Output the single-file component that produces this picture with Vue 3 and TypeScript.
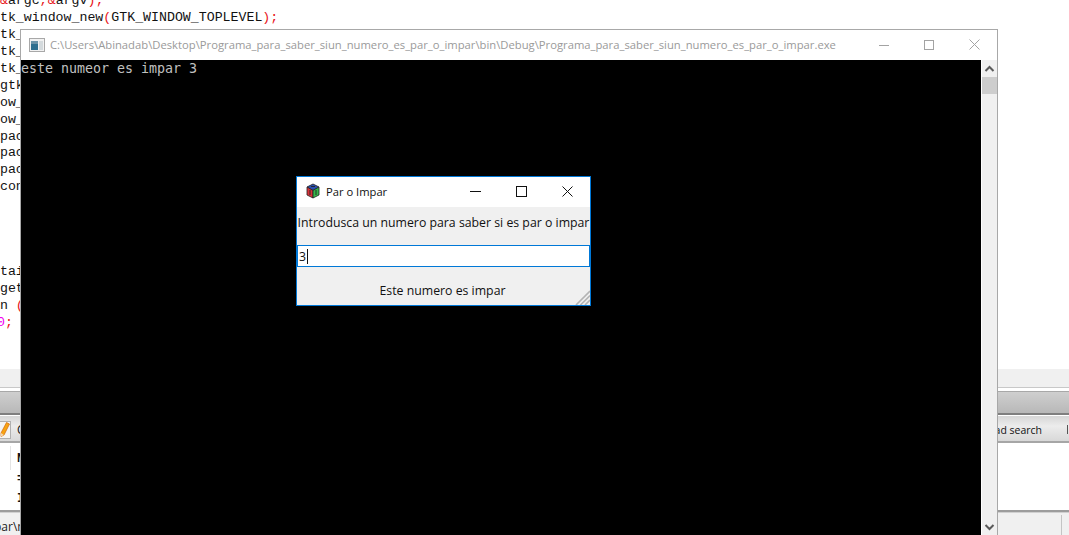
<script setup lang="ts">
interface Part { t: string; c?: string }
const code: Part[][] = [
  [{ t: ' ' }, { t: '&', c: 'r' }, { t: 'argc' }, { t: ',&', c: 'r' }, { t: 'argv' }, { t: ');', c: 'r' }],
  [{ t: 'gtk_window_new' }, { t: '(', c: 'r' }, { t: 'GTK_WINDOW_TOPLEVEL' }, { t: ');', c: 'r' }],
  [{ t: 'gtk_window_set_title' }, { t: '(', c: 'r' }, { t: '"Par o Impar"', c: 'b' }, { t: ');', c: 'r' }],
  [{ t: 'gtk_box_new' }],
  [{ t: 'gtk_entry_new' }],
  [{ t: ' gtk_label_new' }],
  [{ t: ' ow_set_size' }],
  [{ t: ' ow_set_title' }],
  [{ t: ' pack_start' }],
  [{ t: ' pack_start' }],
  [{ t: ' pack_start' }],
  [{ t: ' connect' }],
  [], [], [], [],
  [{ t: ' tain' }],
  [{ t: ' get_text' }],
  [{ t: ' n ' }, { t: '(', c: 'r' }],
  [{ t: '0', c: 'm' }, { t: ';', c: 'r' }],
]
</script>

<template>
  <div class="desktop">
    <div class="editor">
      <div class="code">
        <div v-for="(line, i) in code" :key="i" class="line"><span v-for="(p, j) in line" :key="j" :class="p.c">{{ p.t }}</span></div>
      </div>
      <div class="tabs-light"></div>
      <div class="tabs-dark"></div>
      <div class="toolbar">
        <svg class="pencil" width="11" height="18" viewBox="0 0 11 18">
          <rect x="-1" y=".5" width="11.5" height="17" fill="#f4f4f4" stroke="#b0b0b0" />
          <path d="M6.5 1.5 L9.5 3 L4 14 L1 15.5 L1 12 Z" fill="#f7a412" stroke="#d2660c" stroke-width=".7" />
          <path d="M1 15.5 L1 12 L4 14 Z" fill="#f3d9b0" />
        </svg>
        <span class="tool-c">C</span>
        <span class="search">ad search</span>
        <i class="tick"></i>
      </div>
      <div class="list">
        <div class="list-col">
          <span>N</span>
          <span>=</span>
          <span>I</span>
        </div>
      </div>
      <div class="status"><span class="path">par\main.c</span><i class="sep"></i></div>
    </div>

    <div class="console">
      <div class="con-title">
        <svg width="16" height="14" viewBox="0 0 16 14">
          <rect x=".5" y=".5" width="15" height="13" fill="#f2f2f2" stroke="#a8a8a8" />
          <rect x="2" y="3" width="7" height="9" fill="#2f6f8f" />
          <rect x="2" y="3" width="7" height="3" fill="#6b93a8" />
          <rect x="10" y="3" width="4" height="9" fill="#d4dadd" />
        </svg>
        <span class="con-name">C:\Users\Abinadab\Desktop\Programa_para_saber_siun_numero_es_par_o_impar\bin\Debug\Programa_para_saber_siun_numero_es_par_o_impar.exe</span>
        <div class="con-btns">
          <svg width="10" height="10" viewBox="0 0 10 10"><path d="M0 5.5H10" stroke="#a3a3a3" /></svg>
          <svg width="10" height="10" viewBox="0 0 10 10"><rect x=".5" y=".5" width="9" height="9" fill="none" stroke="#a3a3a3" /></svg>
          <svg width="11" height="11" viewBox="0 0 11 11"><path d="M.5 .5L10.5 10.5M10.5 .5L.5 10.5" stroke="#a3a3a3" /></svg>
        </div>
      </div>
      <div class="con-body">
        <div class="screen">este numeor es impar 3</div>
        <div class="scroll">
          <svg width="11" height="8" viewBox="0 0 11 8"><path d="M1.5 6L5.5 2L9.5 6" fill="none" stroke="#5a5a5a" stroke-width="2" /></svg>
          <div class="thumb"></div>
          <div class="track"></div>
          <svg width="11" height="8" viewBox="0 0 11 8"><path d="M1.5 2L5.5 6L9.5 2" fill="none" stroke="#5a5a5a" stroke-width="2" /></svg>
        </div>
      </div>
    </div>

    <div class="dialog">
      <div class="dlg-title">
        <svg width="16" height="16" viewBox="0 0 16 16">
          <path d="M8 1L14 4L8 7.5L2 4Z" fill="#2a4fb0" stroke="#222" stroke-width=".8" />
          <path d="M2 4L8 7.5V15L2 12Z" fill="#d8323a" stroke="#222" stroke-width=".8" />
          <path d="M14 4L8 7.5V15L14 12Z" fill="#35b84a" stroke="#222" stroke-width=".8" />
          <path d="M5 7V12M11 7V12M6 3.5H10" stroke="#222" stroke-width=".9" fill="none" />
        </svg>
        <span class="dlg-name">Par o Impar</span>
        <div class="dlg-btns">
          <svg width="11" height="11" viewBox="0 0 11 11"><path d="M0 5.5H11" stroke="#111" /></svg>
          <svg width="11" height="11" viewBox="0 0 11 11"><rect x=".5" y=".5" width="10" height="10" fill="none" stroke="#111" /></svg>
          <svg width="11" height="11" viewBox="0 0 11 11"><path d="M.5 .5L10.5 10.5M10.5 .5L.5 10.5" stroke="#111" /></svg>
        </div>
      </div>
      <div class="dlg-body">
        <div class="prompt">Introdusca un numero para saber si es par o impar</div>
        <div class="entry"><span>3</span><i class="caret"></i></div>
        <div class="result">Este numero es impar</div>
        <svg class="grip" width="15" height="15" viewBox="0 0 15 15">
          <path d="M15 1L1 15M15 5.5L5.5 15M15 10L10 15" stroke="#b4b4b4" stroke-width="1.6" />
        </svg>
      </div>
    </div>
  </div>
</template>

<style scoped>
.desktop {
  position: relative;
  width: 1069px;
  height: 535px;
  overflow: hidden;
  background: #fff;
}
.editor {
  display: flex;
  flex-direction: column;
  height: 535px;
}
.code {
  height: 376px;
  margin-left: -8px;
  margin-top: -7px;
  flex: none;
  overflow: hidden;
  font-family: "Liberation Mono", monospace;
  font-size: 13.25px;
  color: #111;
}
.line {
  height: 16.95px;
  line-height: 16.95px;
  white-space: pre;
}
.r { color: #e8141a; }
.b { color: #1a2fd0; }
.m { color: #f000f0; margin-left: 5px; }
.tabs-light {
  flex: none;
  height: 18px;
  background: #f0f0f0;
  border-bottom: 1px solid #c8c8c8;
}
.tabs-dark {
  flex: none;
  height: 21px;
  margin-top: 3px;
  border-top: 1px solid #a8a8a8;
  border-bottom: 2px solid #7f7f7f;
  background: linear-gradient(#cfcfcf, #b8b8b8);
}
.toolbar {
  flex: none;
  display: flex;
  align-items: center;
  box-sizing: border-box;
  height: 27px;
  padding-top: 2px;
  margin-top: 1px;
  border-bottom: 2px solid #a6a6a6;
  background: linear-gradient(#d6d6d6, #ececec 40%, #d8d8d8);
  font-family: "Open Sans", sans-serif;
  font-size: 10.5px;
  color: #111;
}
.pencil { margin-left: 0; }
.tool-c { margin-left: 6px; font-size: 12px; }
.search { margin-left: 970px; white-space: nowrap; }
.tick {
  margin-left: auto;
  margin-right: 1px;
  width: 1px;
  height: 9px;
  background: #555;
}
.list {
  flex: 1;
  min-height: 0;
  padding: 3px 0 0 10px;
  background: #fff;
  border-bottom: 2px solid #9c9c9c;
}
.list-col {
  display: flex;
  flex-direction: column;
  gap: 8px;
  height: 24px;
  padding: 7px 0 0 6px;
  box-sizing: border-box;
  border-left: 1px solid #e4e4e4;
  font-family: "Liberation Mono", monospace;
  font-size: 12px;
  font-weight: 700;
  line-height: 12px;
  color: #111;
}
.status {
  flex: none;
  position: relative;
  box-sizing: border-box;
  height: 23px;
  padding-top: 4px;
  display: flex;
  align-items: center;
  background: #f0f0f0;
  border-top: 1px solid #d0d0d0;
  font-family: "Open Sans", sans-serif;
  font-size: 12px;
  color: #222;
}
.path { margin-left: -6px; }
.sep {
  margin-left: auto;
  margin-right: 7px;
  width: 1px;
  height: 22px;
  background: #c4c4c4;
}
.console {
  position: absolute;
  left: 20px;
  top: 29px;
  width: 978px;
  height: 506px;
  box-sizing: border-box;
  display: flex;
  flex-direction: column;
  background: #fff;
  border: 1px solid #a8a8a8;
  border-bottom: 0;
}
.con-title {
  flex: none;
  height: 30px;
  box-sizing: border-box;
  padding: 0 0 1px 8px;
  display: flex;
  align-items: center;
}
.con-name {
  margin-left: 5px;
  font-family: "Open Sans", sans-serif;
  font-size: 11.25px;
  color: #9a9a9a;
  white-space: nowrap;
  flex: none;
}
.con-btns {
  margin-left: auto;
  display: flex;
  align-items: center;
  gap: 35px;
  padding-right: 17px;
}
.con-body {
  flex: 1;
  min-height: 0;
  display: flex;
}
.screen {
  flex: 1;
  background: #000;
  color: #c0c0c0;
  font-family: "DejaVu Sans Mono", monospace;
  font-size: 13.3px;
  line-height: 18px;
  white-space: pre;
}
.scroll {
  flex: none;
  width: 15px;
  margin-left: 1px;
  display: flex;
  flex-direction: column;
  align-items: center;
  background: #f0f0f0;
}
.scroll svg { flex: none; margin: 5px 0 4px; }
.thumb { flex: none; width: 15px; height: 17px; background: #cdcdcd; }
.track { flex: 1; }
.dialog {
  position: absolute;
  left: 296px;
  top: 176px;
  width: 295px;
  height: 130px;
  box-sizing: border-box;
  display: flex;
  flex-direction: column;
  border: 1px solid #0078d7;
  background: #f0f0f0;
}
.dlg-title {
  flex: none;
  height: 30px;
  box-sizing: border-box;
  padding: 0 0 2px 8px;
  display: flex;
  align-items: center;
  background: #fff;
}
.dlg-name {
  margin-left: 5px;
  font-family: "Open Sans", sans-serif;
  font-size: 11.2px;
  color: #111;
}
.dlg-btns {
  margin-left: auto;
  display: flex;
  align-items: center;
  gap: 35px;
  padding-right: 17px;
}
.dlg-body {
  position: relative;
  flex: 1;
  min-height: 0;
  display: flex;
  flex-direction: column;
  font-family: "Open Sans", sans-serif;
  font-size: 12.3px;
  color: #111;
}
.prompt {
  height: 38px;
  line-height: 32px;
  text-align: center;
  white-space: nowrap;
}
.entry {
  flex: none;
  height: 22px;
  box-sizing: border-box;
  display: flex;
  align-items: center;
  padding-left: 1px;
  background: #fff;
  border: 1px solid #0078d7;
}
.caret {
  width: 1px;
  height: 15px;
  margin-left: 1px;
  background: #111;
}
.result {
  flex: 1;
  padding-top: 15px;
  line-height: 18px;
  text-align: center;
  margin-right: 2px;
}
.grip {
  position: absolute;
  right: 0;
  bottom: 0;
}
</style>
